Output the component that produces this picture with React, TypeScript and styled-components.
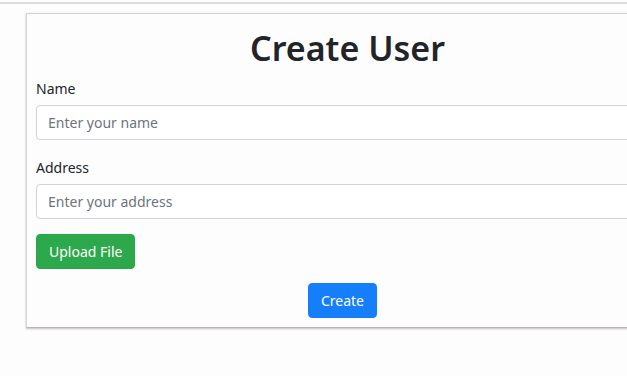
import React from "react";
import styled, { createGlobalStyle } from "styled-components";

const GlobalStyle = createGlobalStyle`
  html, body {
    margin: 0;
    padding: 0;
    background: #fdfdfd;
    overflow: hidden;
  }
  body {
    font-family: "Noto Sans", "Open Sans", "Liberation Sans", sans-serif;
    color: #212529;
  }
  * {
    box-sizing: border-box;
  }
`;

const Page = styled.div`
  width: 627px;
  height: 376px;
  overflow: hidden;
  padding-top: 2px;
`;

const TopRule = styled.div`
  height: 2px;
  background: #dcdcdc;
`;

const Card = styled.form`
  margin: 9px 0 0 26px;
  width: 640px;
  padding: 0 10px 9px 9px;
  border: 1px solid #d4d4d4;
  border-bottom-color: #b9b2b2;
  background: #fdfdfd;
  box-shadow: 0 1px 2px rgba(90, 70, 70, 0.35);
  display: flex;
  flex-direction: column;
`;

const Title = styled.h1`
  margin: 14px 0 10px;
  padding-left: 4px;
  font-size: 34px;
  line-height: 41px;
  font-weight: 600;
  text-align: center;
  color: #212529;
`;

const Field = styled.div`
  display: flex;
  flex-direction: column;
  margin-bottom: 15px;

  & + & {
    margin-top: 3px;
  }
`;

const Label = styled.label`
  font-size: 14px;
  line-height: 20px;
  margin-bottom: 6px;
  color: #212529;
`;

const Input = styled.input`
  height: 35px;
  width: 100%;
  padding: 0 11px;
  font-family: inherit;
  font-size: 14px;
  color: #495057;
  background: #fff;
  border: 1px solid #ced4da;
  border-radius: 4px;
  outline: none;

  &::placeholder {
    color: #6c757d;
  }
`;

const Button = styled.button<{ $tone: "green" | "blue" }>`
  height: 35px;
  padding: 0 12px;
  font-family: inherit;
  font-size: 14px;
  color: #fff;
  border: 1px solid ${({ $tone }) => ($tone === "green" ? "#28a745" : "#157ffb")};
  background: ${({ $tone }) => ($tone === "green" ? "#2ea84c" : "#157ffb")};
  border-radius: 4px;
  cursor: pointer;
`;

const UploadRow = styled.div`
  display: flex;
`;

const Actions = styled.div`
  display: flex;
  justify-content: center;
  margin-top: 14px;
  padding-right: 6px;
`;

export default function App() {
  return (
    <>
      <GlobalStyle />
      <Page>
        <TopRule />
        <Card onSubmit={(e) => e.preventDefault()}>
          <Title>Create User</Title>
          <Field>
            <Label htmlFor="name">Name</Label>
            <Input id="name" type="text" placeholder="Enter your name" />
          </Field>
          <Field>
            <Label htmlFor="address">Address</Label>
            <Input id="address" type="text" placeholder="Enter your address" />
          </Field>
          <UploadRow>
            <Button type="button" $tone="green">
              Upload File
            </Button>
          </UploadRow>
          <Actions>
            <Button type="submit" $tone="blue">
              Create
            </Button>
          </Actions>
        </Card>
      </Page>
    </>
  );
}
